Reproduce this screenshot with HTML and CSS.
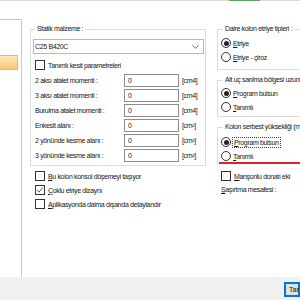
FILE: index.html
```html
<!DOCTYPE html>
<html lang="tr">
<head>
<meta charset="utf-8">
<link rel="stylesheet" href="styles.css">
</head>
<body>
<div class="screen">
  <div class="topline"><span class="tab-accent"></span></div>
  <div class="main">
    <div class="listbox"><div class="list-sel"></div></div>

    <div class="col-mid">
      <fieldset class="grp grp-static">
        <legend>Statik malzeme :</legend>
        <div class="combo"><span>C25 B420C</span>
          <svg class="chev" width="7" height="4" viewBox="0 0 7 4"><path d="M0.5 0.5 L3.5 3.2 L6.5 0.5" fill="none" stroke="#555" stroke-width="0.9"/></svg>
        </div>
        <div class="chk chk-first"><span class="box"></span><span>Tanımlı kesit parametreleri</span></div>
        <div class="row"><span class="lbl">2 aksı atalet momenti :</span><span class="inp">0</span><span class="unit">[cm4]</span></div>
        <div class="row"><span class="lbl">3 aksı atalet momenti :</span><span class="inp">0</span><span class="unit">[cm4]</span></div>
        <div class="row"><span class="lbl">Burulma atalet momenti :</span><span class="inp">0</span><span class="unit">[cm4]</span></div>
        <div class="row"><span class="lbl">Enkesit alanı :</span><span class="inp">0</span><span class="unit">[cm²]</span></div>
        <div class="row"><span class="lbl">2 yönünde kesme alanı :</span><span class="inp">0</span><span class="unit">[cm²]</span></div>
        <div class="row"><span class="lbl">3 yönünde kesme alanı :</span><span class="inp">0</span><span class="unit">[cm²]</span></div>
      </fieldset>
      <div class="opts">
        <div class="chk"><span class="box"></span><span><u>B</u>u kolon konsol döşemeyi taşıyor</span></div>
        <div class="chk"><span class="box checked"><svg width="8" height="8" viewBox="0 0 8 8"><path d="M1.2 4.2 L3 6.2 L6.8 1.4" fill="none" stroke="#333" stroke-width="0.8"/></svg></span><span><u>Ç</u>oklu etriye dizaynı</span></div>
        <div class="chk"><span class="box"></span><span><u>A</u>plikasyonda daima dışarıda detaylandır</span></div>
      </div>
    </div>

    <div class="col-right">
      <fieldset class="grp grp-a">
        <legend>Daire kolon etriye tipleri :</legend>
        <div class="rad"><span class="dot on"></span><span><u>E</u>triye</span></div>
        <div class="rad"><span class="dot"></span><span><u>E</u>triye - çiroz</span></div>
      </fieldset>
      <fieldset class="grp grp-b">
        <legend>Alt uç sarılma bölgesi uzunluğu</legend>
        <div class="rad"><span class="dot on"></span><span><u>P</u>rogram bulsun</span></div>
        <div class="rad"><span class="dot"></span><span><u>T</u>anımlı</span></div>
      </fieldset>
      <fieldset class="grp grp-c">
        <legend>Kolon serbest yüksekliği (m)</legend>
        <div class="rad"><span class="dot on"></span><span class="focus"><u>P</u>rogram bulsun</span></div>
        <div class="rad"><span class="dot"></span><span><u>T</u>anımlı</span></div>
        <span class="redmark"></span>
      </fieldset>
      <div class="chk chk-r"><span class="box"></span><span><u>M</u>anşonlu donatı eki</span></div>
      <div class="txt-r"><u>Ş</u>aşırtma mesafesi :</div>
    </div>
  </div>
  <div class="bottom"><button class="btn">Tamam</button></div>
</div>
</body>
</html>
```
FILE: styles.css
```css
* { box-sizing: border-box; }
html, body { margin: 0; padding: 0; }
body {
  width: 300px;
  height: 300px;
  overflow: hidden;
  background: #fff;
  font-family: "Liberation Sans", Arial, sans-serif;
  font-size: 7px;
  letter-spacing: -0.35px;
  color: #161616;
}
u { text-decoration: underline; text-underline-offset: 1px; }

.screen { width: 300px; height: 300px; display: flex; flex-direction: column; }

.topline { height: 1px; background: #dadada; display: flex; }
.tab-accent { width: 31px; margin-left: 229px; background: #5aa75a; }

.main { height: 276px; display: flex; align-items: flex-start; }

.listbox {
  width: 22px;
  height: 276px;
  margin-top: 18px;
  border-top: 1px solid #c8c8c8;
  border-right: 1px solid #c8c8c8;
  padding-top: 35px;
  flex-shrink: 0;
}
.list-sel {
  width: 18px;
  height: 15px;
  background: linear-gradient(#fee8bb, #f8c472);
  border: 1px solid #ebb76a;
  border-left: none;
}

.col-mid { width: 176px; margin-left: 8px; margin-top: 23px; flex-shrink: 0; }
.col-right { width: 130px; margin-left: 11px; margin-top: 23px; flex-shrink: 0; }

.grp {
  margin: 0;
  border: 1px solid #dcdcdc;
  min-width: 0;
}
.grp legend {
  padding: 0 2px;
  margin-left: 2px;
  line-height: 10px;
  height: 10px;
}

.grp-static { width: 176px; padding: 0 1px 3px 2px; }

.combo {
  margin-top: 5px;
  height: 15px;
  border: 1px solid #b9b9b9;
  display: flex;
  align-items: center;
  justify-content: space-between;
  padding: 0 4px 0 1px;
}

.chk { display: flex; align-items: center; height: 14px; white-space: nowrap; }
.chk .box {
  width: 10px; height: 10px;
  border: 1px solid #333;
  background: #fff;
  margin-right: 3px;
  flex-shrink: 0;
  display: flex; align-items: center; justify-content: center;
}
.chk-first { margin-top: 4px; padding-left: 2px; }

.row { display: flex; align-items: center; height: 13px; margin-top: 2px; padding-left: 2px; white-space: nowrap; }
.lbl { width: 89px; flex-shrink: 0; }
.inp {
  width: 55px; height: 13px;
  border: 1px solid #8c8c8c;
  padding-left: 3px;
  line-height: 11px;
  flex-shrink: 0;
}
.unit { margin-left: 3px; }

.opts { margin-top: 3px; padding-left: 5px; }

.rad { display: flex; align-items: center; height: 14px; white-space: nowrap; }
.dot {
  width: 10px; height: 10px;
  border: 1px solid #333;
  border-radius: 50%;
  background: #fff;
  margin-right: 2px;
  flex-shrink: 0;
  display: flex; align-items: center; justify-content: center;
}
.dot.on::after {
  content: "";
  width: 5px; height: 5px;
  border-radius: 50%;
  background: #222;
}
.focus { outline: 1px dotted #444; outline-offset: 0; padding: 0 1px; line-height: 9px; }

.grp-a { padding: 2px 0 5px 3px; }
.grp-b { margin-top: 5px; padding: 1px 0 2px 3px; }
.grp-c { margin-top: 5px; padding: 3px 0 0 3px; position: relative; }
.redmark {
  position: absolute;
  left: 1px; right: -40px; bottom: -1px;
  height: 2px;
  background: #e3202a;
}
.chk-r { margin-top: 5px; padding-left: 4px; }
.txt-r { height: 14px; line-height: 14px; padding-left: 4px; white-space: nowrap; }

.bottom {
  height: 23px;
  background: #f0f0f0;
  display: flex;
  justify-content: flex-end;
  padding-top: 5px;
}
.btn {
  width: 16px;
  height: 15px;
  margin: 0;
  padding: 0 0 0 4px;
  border: 1px solid #0078d7;
  box-shadow: inset 0 0 0 1px #0078d7;
  background: #e1e1e1;
  font: inherit;
  color: #111;
  text-align: left;
  overflow: hidden;
  white-space: nowrap;
}
```
